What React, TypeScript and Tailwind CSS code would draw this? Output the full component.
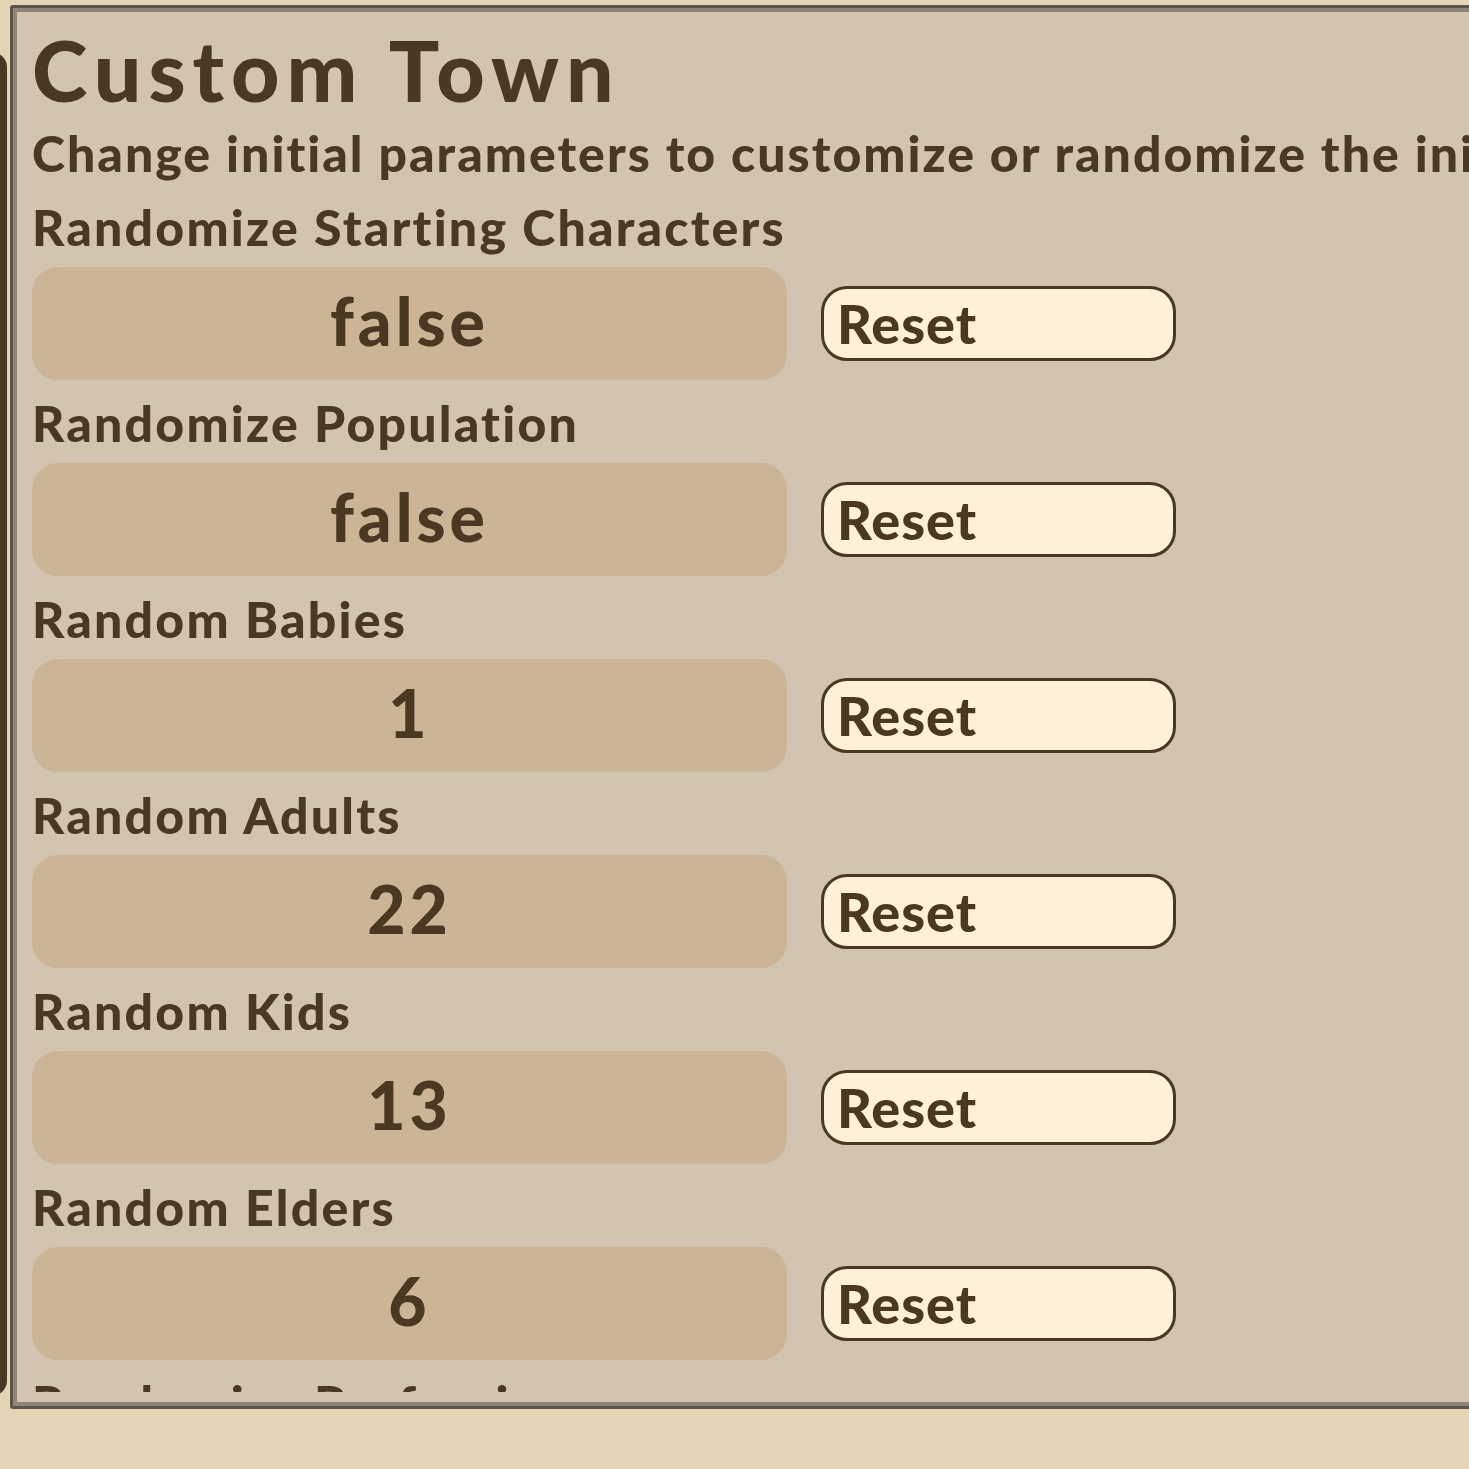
const rows = [
  { label: "Randomize Starting Characters", value: "false" },
  { label: "Randomize Population", value: "false" },
  { label: "Random Babies", value: "1" },
  { label: "Random Adults", value: "22" },
  { label: "Random Kids", value: "13" },
  { label: "Random Elders", value: "6" },
  { label: "Randomize Professions", value: "false" },
];

function SettingRow({ label, value }: { label: string; value: string }) {
  return (
    <div className="flex flex-col">
      <p className="mt-[12px] text-[50px] font-black leading-[62px] tracking-[2.2px]">{label}</p>
      <div className="mt-[9px] flex items-center gap-[34px]">
        <div className="flex h-[113px] w-[755px] items-center justify-center rounded-[26px] bg-[#cbb596] pb-[6px] text-[66px] font-black tracking-[4px]">
          {value}
        </div>
        <button className="flex h-[75px] w-[355px] items-center rounded-[26px] border-[3px] border-[#4b3822] bg-[#fff0da] pl-[13px] text-[54px] font-black leading-none tracking-[1px] text-[#4b3822]">
          Reset
        </button>
      </div>
    </div>
  );
}

export default function App() {
  return (
    <div className="relative h-[1469px] w-[1469px] overflow-hidden bg-[#e4d3b4] font-['Lato',sans-serif] text-[#4b3822]">
      <div className="absolute left-[-24px] top-[52px] h-[1344px] w-[31px] rounded-[22px] bg-[#4b3822]" />
      <div className="relative ml-[10px] mt-[5px] h-[1404px] w-[1600px] rounded-[3px] border-[3px] border-[#5c544a]">
        <div className="h-full overflow-hidden border-4 border-[#8c8474] bg-[#d2c4b0]">
          <div className="h-[1380px] overflow-hidden pl-[15px] pt-[8px]">
            <h1 className="text-[84px] font-black leading-[100px] tracking-[7px]">Custom Town</h1>
            <p className="mt-[2px] whitespace-nowrap text-[50px] font-black leading-[62px] tracking-[2px]">
              Change initial parameters to customize or randomize the initial town
            </p>
            {rows.map((r) => (
              <SettingRow key={r.label} label={r.label} value={r.value} />
            ))}
          </div>
        </div>
      </div>
    </div>
  );
}
